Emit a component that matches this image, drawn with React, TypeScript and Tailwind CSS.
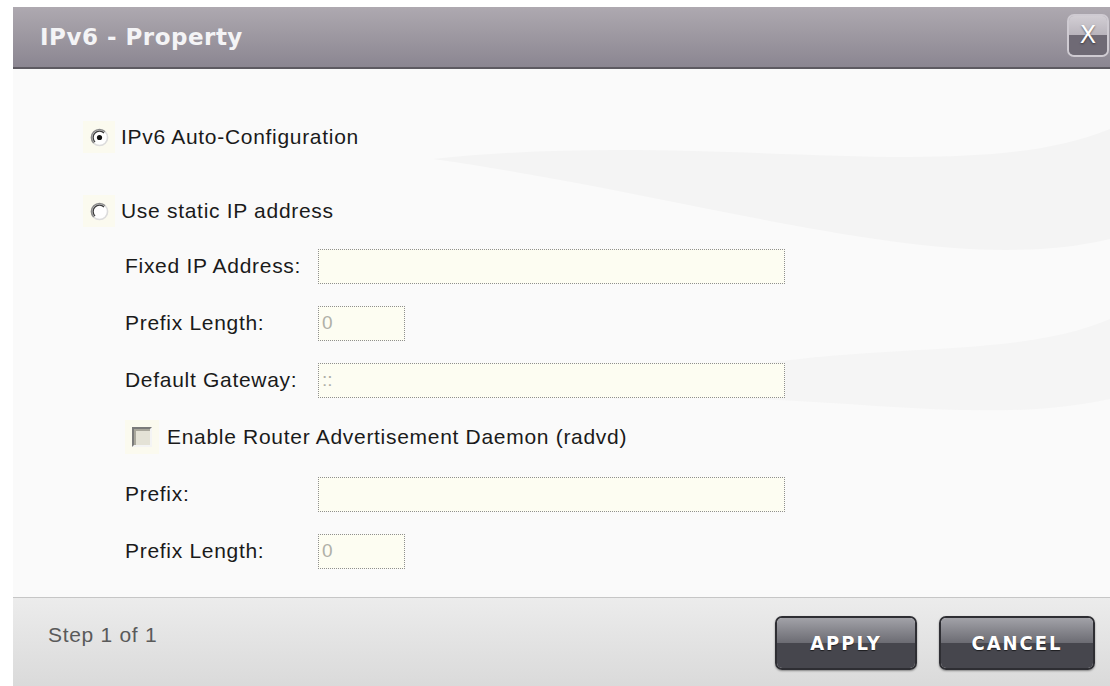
import React from 'react';

const FONT = "font-['Liberation_Sans',Arial,sans-serif]";

// Classic XP-style radio button sitting on a cream focus square
const Radio: React.FC<{ checked?: boolean }> = ({ checked }) => (
    <span className="flex h-[32px] w-[32px] items-center justify-center bg-[#fbfaef]">
        <svg width="19" height="19" viewBox="0 0 19 19">
            <circle cx="9.5" cy="9.5" r="8" fill="#ffffff" />
            <path d="M3.8 15.2 A8 8 0 0 1 15.2 3.8" stroke="#8a8a8a" strokeWidth="1.6" fill="none" />
            <path d="M5 14 A6.3 6.3 0 0 1 14 5" stroke="#3c3c3c" strokeWidth="1.3" fill="none" />
            <path d="M15.2 3.8 A8 8 0 0 1 3.8 15.2" stroke="#dcdcdc" strokeWidth="1.6" fill="none" />
            {checked && <circle cx="9.5" cy="9.5" r="2.6" fill="#111111" />}
        </svg>
    </span>
);

// Disabled checkbox, sunken look
const Checkbox: React.FC = () => (
    <span className="flex h-[34px] w-[34px] items-center justify-center bg-[#fbfaef]">
        <span className="block h-[20px] w-[20px] border-2 border-t-[#7a7a7a] border-l-[#7a7a7a] border-b-[#f4f4f4] border-r-[#f4f4f4] bg-[#e4e2d6]">
            <span className="block h-full w-full border-t-2 border-l-2 border-[#a9a79c]" />
        </span>
    </span>
);

const Field: React.FC<{ value?: string; small?: boolean }> = ({ value = '', small }) => (
    <div
        className={`flex h-[35px] items-center border border-dotted border-[#8f8f8f] bg-[#fdfdf2] px-[3px] text-[19px] text-[#b0b0a8] ${small ? 'w-[87px]' : 'w-[467px]'}`}
    >
        {value}
    </div>
);

const Row: React.FC<{ label: string; children: React.ReactNode }> = ({ label, children }) => (
    <div className="flex h-[36px] items-center">
        <span className="w-[193px] text-[21px] tracking-[0.7px] text-[#1a1a1a]">{label}</span>
        {children}
    </div>
);

const DarkButton: React.FC<{ label: string; width: string }> = ({ label, width }) => (
    <button
        className={`relative flex h-[54px] ${width} items-center justify-center overflow-hidden rounded-[7px] border-2 border-[#2e2e33] shadow-[0_1px_2px_rgba(0,0,0,0.4)]`}
    >
        <span className="absolute inset-x-0 top-0 h-1/2 bg-gradient-to-b from-[#a2a2a8] to-[#6c6c73]" />
        <span className="absolute inset-x-0 bottom-0 h-1/2 bg-[#46464d]" />
        <span className="relative font-['Liberation_Sans_Narrow','DejaVu_Sans_Condensed','Liberation_Sans',sans-serif] text-[20px] font-bold tracking-[2px] text-white [text-shadow:0_1px_1px_rgba(0,0,0,0.6)]">
            {label}
        </span>
    </button>
);

export default function App() {
    return (
        <div className={`h-[686px] w-[1110px] overflow-hidden bg-white pl-[13px] pt-[7px] ${FONT}`}>
            <div className="flex h-full flex-col">
                {/* Title bar */}
                <header className="flex h-[62px] shrink-0 items-center justify-between border-b-2 border-[#5d5a61] bg-gradient-to-b from-[#aea9b0] to-[#8b8691] pl-[27px] pr-[1px]">
                    <h1 className="font-['DejaVu_Sans',sans-serif] text-[23px] font-bold tracking-[0.5px] text-[#f4f4f6]">
                        IPv6 - Property
                    </h1>
                    <button className="relative -mt-[4px] flex h-[43px] w-[42px] items-center justify-center overflow-hidden rounded-[7px] border-2 border-[#cfcbd2]">
                        <span className="absolute inset-x-0 top-0 h-1/2 bg-gradient-to-b from-[#d2ced4] to-[#b9b4bc]" />
                        <span className="absolute inset-x-0 bottom-0 h-1/2 bg-[#6f6a75]" />
                        <span className="relative font-['DejaVu_Sans',sans-serif] text-[24px] text-white [text-shadow:0_1px_2px_rgba(0,0,0,0.5)]">
                            X
                        </span>
                    </button>
                </header>

                {/* Form body */}
                <main className="relative flex-1 bg-[#fafafa]">
                    <svg className="pointer-events-none absolute inset-0 h-full w-full" viewBox="0 0 1097 528" preserveAspectRatio="none">
                        <path d="M420 90 C700 60 950 120 1097 60 L1097 170 C930 210 700 130 420 90 Z" fill="#f4f4f4" />
                        <path d="M600 330 C800 260 980 300 1097 250 L1097 330 C960 360 800 320 600 330 Z" fill="#f5f5f5" />
                    </svg>
                    <div className="relative flex flex-col pl-[70px] pt-[50px] text-[#1a1a1a]">
                        <label className="flex h-[36px] items-center">
                            <Radio checked />
                            <span className="ml-[6px] text-[21px] tracking-[0.7px]">IPv6 Auto-Configuration</span>
                        </label>
                        <label className="mt-[38px] flex h-[36px] items-center">
                            <Radio />
                            <span className="ml-[6px] text-[21px] tracking-[0.7px]">Use static IP address</span>
                        </label>

                        <div className="mt-[19px] flex flex-col gap-[21px] pl-[42px]">
                            <Row label="Fixed IP Address:">
                                <Field />
                            </Row>
                            <Row label="Prefix Length:">
                                <Field value="0" small />
                            </Row>
                            <Row label="Default Gateway:">
                                <Field value="::" />
                            </Row>
                            <label className="flex h-[36px] items-center">
                                <Checkbox />
                                <span className="ml-[8px] text-[21px] tracking-[0.7px]">Enable Router Advertisement Daemon (radvd)</span>
                            </label>
                            <Row label="Prefix:">
                                <Field />
                            </Row>
                            <Row label="Prefix Length:">
                                <Field value="0" small />
                            </Row>
                        </div>
                    </div>
                </main>

                {/* Footer */}
                <footer className="flex h-[89px] shrink-0 items-start justify-between border-t border-[#c6c6c6] bg-gradient-to-b from-[#ececec] to-[#dadada] pl-[35px] pr-[15px]">
                    <span className="pt-[21px] text-[21px] tracking-[0.7px] text-[#5a5a5a]">Step 1 of 1</span>
                    <div className="flex gap-[22px] pt-[18px]">
                        <DarkButton label="APPLY" width="w-[142px]" />
                        <DarkButton label="CANCEL" width="w-[156px]" />
                    </div>
                </footer>
            </div>
        </div>
    );
}
